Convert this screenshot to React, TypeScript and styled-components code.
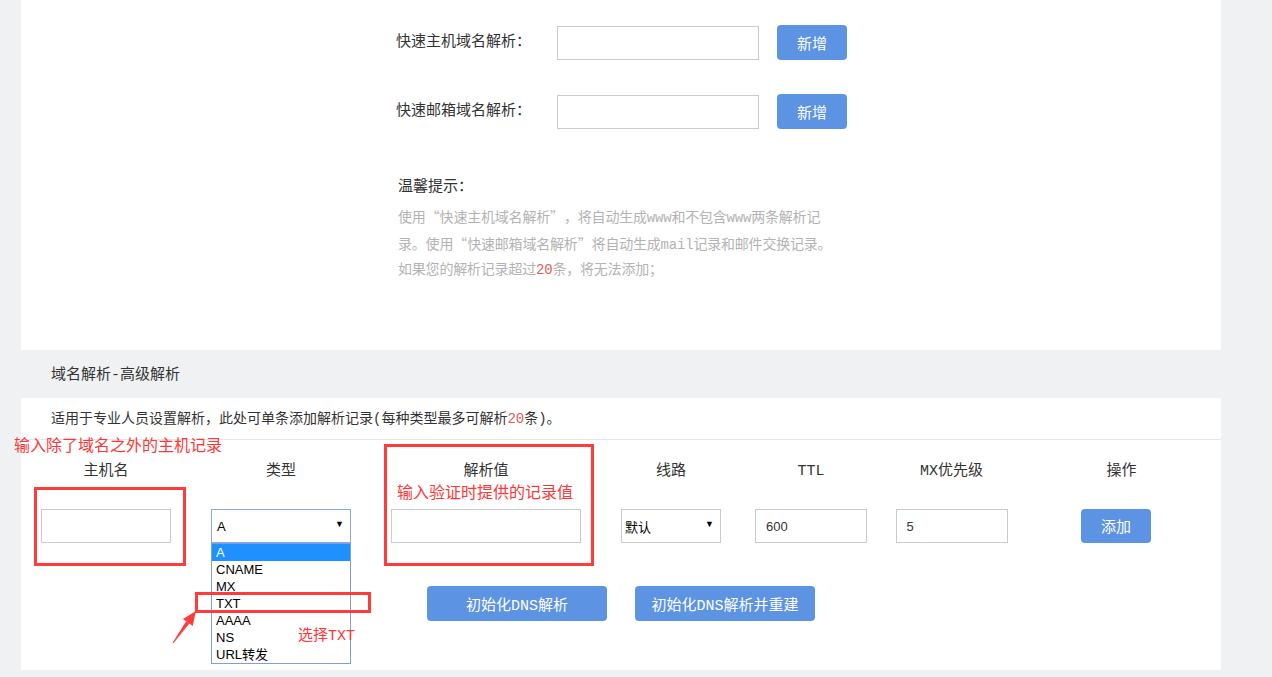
import * as React from 'react'
import styled, { createGlobalStyle } from 'styled-components'

const GlobalStyle = createGlobalStyle`
  html, body {
    margin: 0;
    padding: 0;
    background: #f0f1f3;
  }
  body {
    font-family: "Liberation Mono", "Noto Sans CJK SC", monospace;
    color: #333;
  }
`

const blue = '#5d93e3'
const red = '#ff3636'

const Page = styled.div`
  position: relative;
  width: 1272px;
  height: 677px;
  padding-left: 21px;
  box-sizing: border-box;
  overflow: hidden;
`
const Panel = styled.div`
  width: 1200px;
  background: #fff;
`
const QuickPanel = styled(Panel)`
  height: 350px;
  padding-top: 25px;
  box-sizing: border-box;
`
const QuickForm = styled.div`
  width: 452px;
  margin-left: 375px;
`
const QuickRow = styled.div`
  display: flex;
  align-items: center;
  height: 35px;
  & + & {
    margin-top: 34px;
  }
`
const QuickLabel = styled.label`
  width: 161px;
  font-size: 15px;
  line-height: 20px;
  color: #333;
`
const TextInput = styled.input<{ $w: number }>`
  width: ${({ $w }) => $w}px;
  height: 34px;
  box-sizing: border-box;
  border: 1px solid #cbcbcb;
  outline: none;
  padding: 0 10px;
  font-family: "Liberation Sans", "Noto Sans CJK SC", sans-serif;
  font-size: 13px;
  color: #333;
  background: #fff;
`
const BlueButton = styled.button<{ $w: number; $h?: number }>`
  width: ${({ $w }) => $w}px;
  height: ${({ $h }) => $h ?? 35}px;
  border: none;
  border-radius: 4px;
  background: ${blue};
  color: #fff;
  font-family: "Liberation Mono", "Noto Sans CJK SC", monospace;
  font-size: 15px;
  padding: 0;
  cursor: pointer;
`
const AddButton = styled(BlueButton)`
  margin-left: 18px;
`
const Tips = styled.div`
  margin-top: 46px;
  padding-left: 2px;
`
const TipsTitle = styled.div`
  font-size: 15px;
  line-height: 25px;
  color: #333;
  margin-bottom: 4px;
`
const TipsText = styled.p`
  margin: 0;
  font-size: 14px;
  line-height: 25px;
  color: #b3b3b3;
  white-space: nowrap;
  letter-spacing: -0.2px;
`
const Quote = styled.span`
  font-family: "Noto Sans CJK SC", sans-serif;
  display: inline-block;
  width: 14px;
  text-align: center;
`
const Red = styled.span`
  color: #e35d5d;
`
const SectionTitle = styled.div`
  height: 48px;
  box-sizing: border-box;
  padding: 14px 0 0 30px;
  line-height: 24px;
  font-size: 15px;
  color: #333;
`
const AdvancedPanel = styled(Panel)`
  height: 272px;
`
const Intro = styled.div`
  height: 41px;
  line-height: 42px;
  padding-left: 30px;
  border-bottom: 1px solid #e6e6e6;
  font-size: 14px;
  color: #333;
`
const RecordGrid = styled.div`
  display: grid;
  grid-template-columns: 170px 180px 230px 140px 140px 141px 199px;
  grid-template-rows: 20px 34px;
  row-gap: 27px;
  padding-top: 22px;
`
const HeadCell = styled.div`
  text-align: center;
  font-size: 15px;
  line-height: 20px;
  color: #333;
`
const Cell = styled.div<{ $shift?: number }>`
  position: relative;
  display: flex;
  justify-content: center;
  align-items: center;
  padding-right: ${({ $shift }) => $shift ?? 0}px;
`
const SelectBox = styled.div<{ $w: number; $focus?: boolean }>`
  position: relative;
  width: ${({ $w }) => $w}px;
  height: 34px;
  box-sizing: border-box;
  border: 1px solid ${({ $focus }) => ($focus ? '#86aaea' : '#cbcbcb')};
  display: flex;
  align-items: center;
  padding-left: ${({ $focus }) => ($focus ? 5 : 3)}px;
  font-family: "Liberation Sans", "Noto Sans CJK SC", sans-serif;
  font-size: 13px;
  color: #000;
  background: #fff;
`
const Caret = styled.span`
  position: absolute;
  right: 6px;
  top: 9px;
  font-size: 9px;
  color: #000;
`
const OptionList = styled.ul`
  position: absolute;
  left: 20px;
  top: 34px;
  width: 140px;
  box-sizing: border-box;
  margin: 0;
  padding: 0;
  list-style: none;
  border: 1px solid #7f9fd6;
  background: #fff;
  z-index: 2;
`
const Option = styled.li<{ $active?: boolean }>`
  height: 17px;
  line-height: 17px;
  padding-left: 4px;
  font-family: "Liberation Sans", "Noto Sans CJK SC", sans-serif;
  font-size: 13px;
  color: ${({ $active }) => ($active ? '#fff' : '#000')};
  background: ${({ $active }) => ($active ? '#1e90ff' : '#fff')};
`
const Actions = styled.div`
  display: flex;
  justify-content: center;
  gap: 28px;
  margin-top: 43px;
`

/* red notes drawn over the form */
const NoteText = styled.div<{ $x: number; $y: number; $size: number }>`
  position: absolute;
  left: ${({ $x }) => $x}px;
  top: ${({ $y }) => $y}px;
  font-size: ${({ $size }) => $size}px;
  line-height: 20px;
  color: ${red};
  white-space: nowrap;
  z-index: 3;
`
const NoteBox = styled.div<{ $x: number; $y: number; $w: number; $h: number }>`
  position: absolute;
  left: ${({ $x }) => $x}px;
  top: ${({ $y }) => $y}px;
  width: ${({ $w }) => $w}px;
  height: ${({ $h }) => $h}px;
  box-sizing: border-box;
  border: 3px solid #ff3c3c;
  z-index: 3;
  pointer-events: none;
`
const ArrowSvg = styled.svg`
  position: absolute;
  left: 160px;
  top: 600px;
  z-index: 3;
`

const types = ['A', 'CNAME', 'MX', 'TXT', 'AAAA', 'NS', 'URL转发']

function QuickSection() {
  return (
    <QuickPanel>
      <QuickForm>
        <QuickRow>
          <QuickLabel>快速主机域名解析：</QuickLabel>
          <TextInput $w={202} />
          <AddButton $w={70}>新增</AddButton>
        </QuickRow>
        <QuickRow>
          <QuickLabel>快速邮箱域名解析：</QuickLabel>
          <TextInput $w={202} />
          <AddButton $w={70}>新增</AddButton>
        </QuickRow>
        <Tips>
          <TipsTitle>温馨提示：</TipsTitle>
          <TipsText>
            使用<Quote>“</Quote>快速主机域名解析<Quote>”</Quote>，将自动生成www和不包含www两条解析记
            <br />
            录。使用<Quote>“</Quote>快速邮箱域名解析<Quote>”</Quote>将自动生成mail记录和邮件交换记录。
            <br />
            如果您的解析记录超过<Red>20</Red>条，将无法添加；
          </TipsText>
        </Tips>
      </QuickForm>
    </QuickPanel>
  )
}

function AdvancedSection() {
  return (
    <AdvancedPanel>
      <Intro>
        适用于专业人员设置解析，此处可单条添加解析记录(每种类型最多可解析<Red>20</Red>条)。
      </Intro>
      <RecordGrid>
        <HeadCell>主机名</HeadCell>
        <HeadCell>类型</HeadCell>
        <HeadCell>解析值</HeadCell>
        <HeadCell>线路</HeadCell>
        <HeadCell>TTL</HeadCell>
        <HeadCell>MX优先级</HeadCell>
        <HeadCell>操作</HeadCell>

        <Cell>
          <TextInput $w={130} />
        </Cell>
        <Cell>
          <SelectBox $w={140} $focus>
            A<Caret>▼</Caret>
          </SelectBox>
          <OptionList>
            {types.map((t, i) => (
              <Option key={t} $active={i === 0}>
                {t}
              </Option>
            ))}
          </OptionList>
        </Cell>
        <Cell>
          <TextInput $w={190} />
        </Cell>
        <Cell>
          <SelectBox $w={100}>
            默认<Caret>▼</Caret>
          </SelectBox>
        </Cell>
        <Cell>
          <TextInput $w={112} defaultValue="600" />
        </Cell>
        <Cell>
          <TextInput $w={112} defaultValue="5" />
        </Cell>
        <Cell $shift={11}>
          <BlueButton $w={70} $h={34}>
            添加
          </BlueButton>
        </Cell>
      </RecordGrid>
      <Actions>
        <BlueButton $w={180}>初始化DNS解析</BlueButton>
        <BlueButton $w={180}>初始化DNS解析并重建</BlueButton>
      </Actions>
    </AdvancedPanel>
  )
}

export default function App() {
  return (
    <>
      <GlobalStyle />
      <Page>
        <QuickSection />
        <SectionTitle>域名解析-高级解析</SectionTitle>
        <AdvancedSection />

        <NoteText $x={14} $y={437} $size={16}>
          输入除了域名之外的主机记录
        </NoteText>
        <NoteBox $x={34} $y={487} $w={152} $h={79} />
        <NoteBox $x={384} $y={444} $w={210} $h={122} />
        <NoteText $x={397} $y={484} $size={16}>
          输入验证时提供的记录值
        </NoteText>
        <NoteBox $x={195} $y={592} $w={176} $h={21} />
        <NoteText $x={298} $y={627} $size={15}>
          选择TXT
        </NoteText>
        <ArrowSvg width="50" height="50" viewBox="160 600 50 50">
          <polygon
            points="172.6,642.7 173.4,643.3 189.4,623.6 186.2,621.3"
            fill="#ff3c3c"
          />
          <polygon points="196,611 192.7,625.9 182.9,618.9" fill="#ff3c3c" />
        </ArrowSvg>
      </Page>
    </>
  )
}
